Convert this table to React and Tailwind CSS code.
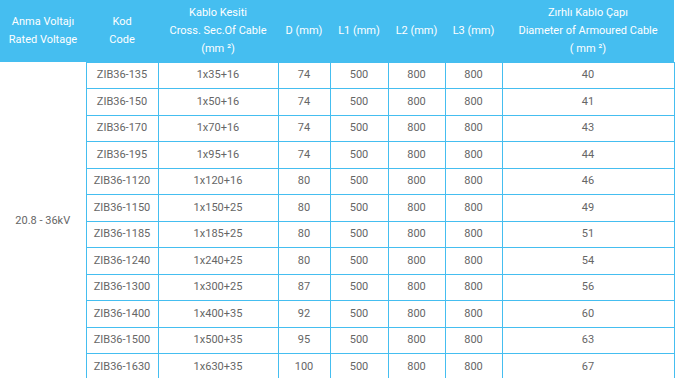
import React from 'react';

const rows = [
  ['ZIB36-135', '1x35+16', '74', '40'],
  ['ZIB36-150', '1x50+16', '74', '41'],
  ['ZIB36-170', '1x70+16', '74', '43'],
  ['ZIB36-195', '1x95+16', '74', '44'],
  ['ZIB36-1120', '1x120+16', '80', '46'],
  ['ZIB36-1150', '1x150+25', '80', '49'],
  ['ZIB36-1185', '1x185+25', '80', '51'],
  ['ZIB36-1240', '1x240+25', '80', '54'],
  ['ZIB36-1300', '1x300+25', '87', '56'],
  ['ZIB36-1400', '1x400+35', '92', '60'],
  ['ZIB36-1500', '1x500+35', '95', '63'],
  ['ZIB36-1630', '1x630+35', '100', '67'],
];

const cell = 'border border-[#45bef0] text-center align-middle p-0';

export default function App() {
  return (
    <div className="w-[677px] h-[378px] overflow-hidden bg-white font-['Roboto',sans-serif] text-[11px]">
      <table className="table-fixed border-collapse w-[674px]">
        <colgroup>
          <col className="w-[86px]" />
          <col className="w-[72px]" />
          <col className="w-[120px]" />
          <col className="w-[52px]" />
          <col className="w-[58px]" />
          <col className="w-[57px]" />
          <col className="w-[57px]" />
          <col className="w-[172px]" />
        </colgroup>
        <thead>
          <tr className="h-[62px] bg-[#45bef0] text-white leading-[18px]">
            <th className="font-normal text-center align-middle p-0">Anma Voltajı<br />Rated Voltage</th>
            <th className="font-normal text-center align-middle p-0">Kod<br />Code</th>
            <th className="font-normal text-center align-middle p-0">Kablo Kesiti<br />Cross. Sec.Of Cable<br />(mm ²)</th>
            <th className="font-normal text-center align-middle p-0">D (mm)</th>
            <th className="font-normal text-center align-middle p-0">L1 (mm)</th>
            <th className="font-normal text-center align-middle p-0">L2 (mm)</th>
            <th className="font-normal text-center align-middle p-0">L3 (mm)</th>
            <th className="font-normal text-center align-middle p-0">Zırhlı Kablo Çapı<br />Diameter of Armoured Cable<br />( mm ²)</th>
          </tr>
        </thead>
        <tbody className="text-[#666666]">
          {rows.map((r, i) => (
            <tr key={r[0]} className="h-[26.5px]">
              {i === 0 && (
                <td rowSpan={12} className="border-r border-[#45bef0] text-center align-middle p-0">
                  20.8 - 36kV
                </td>
              )}
              <td className={cell}>{r[0]}</td>
              <td className={cell}>{r[1]}</td>
              <td className={cell}>{r[2]}</td>
              <td className={cell}>500</td>
              <td className={cell}>800</td>
              <td className={cell}>800</td>
              <td className={cell}>{r[3]}</td>
            </tr>
          ))}
        </tbody>
      </table>
    </div>
  );
}
